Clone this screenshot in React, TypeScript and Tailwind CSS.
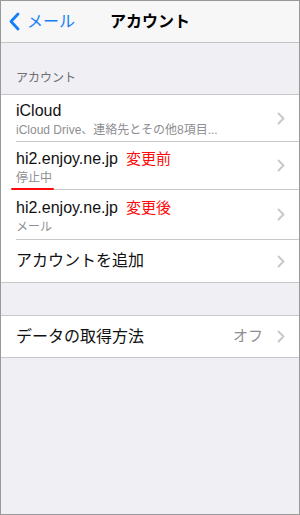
import React from 'react';

const JP = { fontFamily: '"Liberation Sans", "Noto Sans CJK JP", sans-serif' };

function Chevron() {
  return (
    <svg width="8" height="13" viewBox="0 0 8 13" className="shrink-0">
      <polyline points="1.5,1.5 6.5,6.5 1.5,11.5" fill="none" stroke="#c7c7cc" strokeWidth="1.8" strokeLinecap="round" strokeLinejoin="round" />
    </svg>
  );
}

function Row({
  title,
  note,
  sub,
  subMark,
  detail,
  height,
  last,
}: {
  title: string;
  note?: string;
  sub?: string;
  subMark?: boolean;
  detail?: string;
  height: string;
  last?: boolean;
}) {
  return (
    <div className={`flex items-stretch bg-white pl-[15px] ${height}`}>
      <div className={`flex flex-1 items-center pr-[14px] ${last ? '' : 'border-b border-[#c8c7cc]'}`}>
        <div className={`flex flex-1 flex-col justify-center min-w-0 ${sub ? 'pt-[3px]' : ''}`}>
          <div className="flex items-baseline leading-[20px]">
            <span className="text-[16px] text-[#111]">{title}</span>
            {note && <span className="ml-[8px] text-[15px] text-[#ff0a0a]">{note}</span>}
          </div>
          {sub && (
            <div className="relative mt-[2px] w-fit text-[12px] leading-[15px] text-[#8e8e93]">
              {sub}
              {subMark && <div className="absolute left-[-5px] right-[-2px] top-[17px] h-[2px] rounded bg-[#ff0a0a]" />}
            </div>
          )}
        </div>
        {detail && <span className="mr-[14px] text-[15px] text-[#8e8e93]">{detail}</span>}
        <Chevron />
      </div>
    </div>
  );
}

export default function App() {
  return (
    <div className="w-[300px] h-[515px] border border-[#999] bg-[#efeff4] flex flex-col overflow-hidden" style={JP}>
      {/* Nav bar */}
      <div className="relative h-[42px] shrink-0 bg-[#f7f7f7] border-b border-[#c4c4c8] flex items-center">
        <div className="flex items-center pl-[8px] text-[#147efb]">
          <svg width="11" height="19" viewBox="0 0 11 19">
            <polyline points="9,2 2,9.5 9,17" fill="none" stroke="#147efb" strokeWidth="2.8" strokeLinecap="round" strokeLinejoin="round" />
          </svg>
          <span className="ml-[7px] text-[16px]">メール</span>
        </div>
        <div className="absolute inset-x-0 top-0 bottom-0 flex items-center justify-center pointer-events-none">
          <span className="text-[16px] font-bold text-black">アカウント</span>
        </div>
      </div>

      {/* Section header */}
      <div className="h-[51px] shrink-0 flex items-end pl-[15px] pb-[7px] text-[12px] text-[#6d6d72]">アカウント</div>

      {/* Accounts group */}
      <div className="border-y border-[#c8c7cc]">
        <Row title="iCloud" sub="iCloud Drive、連絡先とその他8項目..." height="h-[47px]" />
        <Row title="hi2.enjoy.ne.jp" note="変更前" sub="停止中" subMark height="h-[48px]" />
        <Row title="hi2.enjoy.ne.jp" note="変更後" sub="メール" height="h-[50px]" />
        <Row title="アカウントを追加" height="h-[42px]" last />
      </div>

      <div className="h-[32px] shrink-0" />

      {/* Fetch group */}
      <div className="border-y border-[#c8c7cc]">
        <Row title="データの取得方法" detail="オフ" height="h-[41px]" last />
      </div>
    </div>
  );
}
